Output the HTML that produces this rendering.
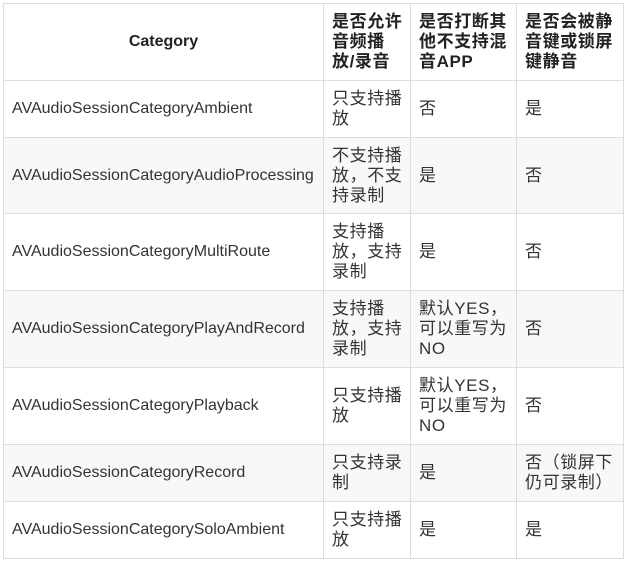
<!DOCTYPE html>
<html><head><meta charset="utf-8"><style>
html,body{margin:0;padding:0;background:#fff;width:628px;height:561px;overflow:hidden}
table{position:absolute;left:3px;top:3px;width:620px;border-collapse:collapse;table-layout:fixed;font-family:"Liberation Sans","Noto Sans CJK SC",sans-serif;font-size:16px;line-height:20px;color:#333}
td,th{border:1px solid #ddd;padding:0 8px;vertical-align:middle;text-align:left;white-space:nowrap;overflow:hidden}
td+td,th+th{font-size:17px;letter-spacing:0.6px;padding:0 4px 0 8px}
th{font-weight:bold;color:#222}
th.c{text-align:center}
tr.g td{background:#f8f8f8}
</style></head><body>
<table>
<colgroup><col style="width:320px"><col style="width:87px"><col style="width:106px"><col style="width:107px"></colgroup>
<tr style="height:77px"><th class="c">Category</th><th>是否允许<br>音频播<br>放/录音</th><th>是否打断其<br>他不支持混<br>音APP</th><th>是否会被静<br>音键或锁屏<br>键静音</th></tr>
<tr style="height:57px"><td>AVAudioSessionCategoryAmbient</td><td>只支持播<br>放</td><td>否</td><td>是</td></tr>
<tr class="g" style="height:76px"><td>AVAudioSessionCategoryAudioProcessing</td><td>不支持播<br>放，不支<br>持录制</td><td>是</td><td>否</td></tr>
<tr style="height:77px"><td>AVAudioSessionCategoryMultiRoute</td><td>支持播<br>放，支持<br>录制</td><td>是</td><td>否</td></tr>
<tr class="g" style="height:77px"><td>AVAudioSessionCategoryPlayAndRecord</td><td>支持播<br>放，支持<br>录制</td><td>默认YES，<br>可以重写为<br>NO</td><td>否</td></tr>
<tr style="height:77px"><td>AVAudioSessionCategoryPlayback</td><td>只支持播<br>放</td><td>默认YES，<br>可以重写为<br>NO</td><td>否</td></tr>
<tr class="g" style="height:57px"><td>AVAudioSessionCategoryRecord</td><td>只支持录<br>制</td><td>是</td><td>否（锁屏下<br>仍可录制）</td></tr>
<tr style="height:57px"><td>AVAudioSessionCategorySoloAmbient</td><td>只支持播<br>放</td><td>是</td><td>是</td></tr>
</table>
</body></html>
